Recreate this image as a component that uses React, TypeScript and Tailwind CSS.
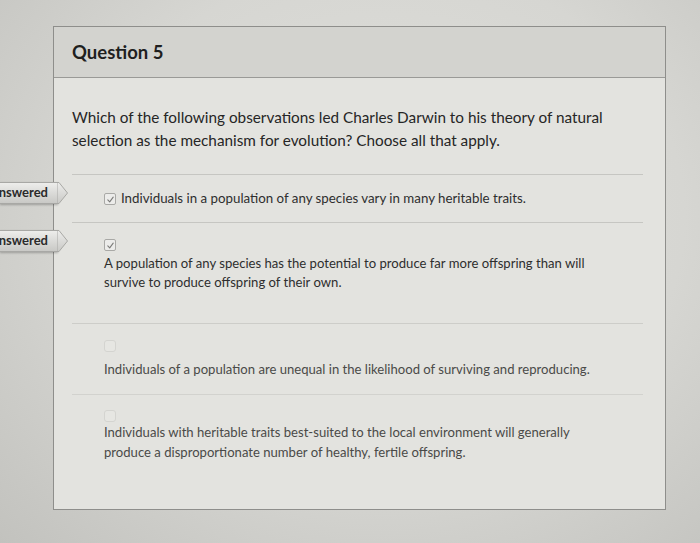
import React from 'react';

type Option = {
    text: string[];
    checked: boolean;
    inline?: boolean;
};

const options: Option[] = [
    {
        text: ['Individuals in a population of any species vary in many heritable traits.'],
        checked: true,
        inline: true,
    },
    {
        text: [
            'A population of any species has the potential to produce far more offspring than will',
            'survive to produce offspring of their own.',
        ],
        checked: true,
    },
    {
        text: ['Individuals of a population are unequal in the likelihood of surviving and reproducing.'],
        checked: false,
    },
    {
        text: [
            'Individuals with heritable traits best-suited to the local environment will generally',
            'produce a disproportionate number of healthy, fertile offspring.',
        ],
        checked: false,
    },
];

function Checkbox({ checked }: { checked: boolean }) {
    if (!checked) {
        return <div className="w-[12px] h-[12px] rounded-[3px] border border-[#d4d4d0] bg-[#e6e6e2] shrink-0" />;
    }
    return (
        <div className="w-[12px] h-[12px] rounded-[2px] border border-[#a9a9a6] bg-[#ececea] flex items-center justify-center shrink-0">
            <svg width="9" height="9" viewBox="0 0 10 10" fill="none">
                <path d="M2 5.4 L4.1 7.6 L8 2.4" stroke="#7a7a78" strokeWidth="1.2" strokeLinecap="round" strokeLinejoin="round" />
            </svg>
        </div>
    );
}

function AnsweredTab({ top }: { top: string }) {
    return (
        <div className={`absolute left-0 ${top} h-[22px] w-[68px] flex`}>
            <div className="h-full w-[58px] bg-gradient-to-b from-[#ededeb] to-[#c9c9c6] border-y border-[#a8a8a5] overflow-hidden flex items-center justify-end pr-[10px] shadow-[0_1px_2px_rgba(0,0,0,0.25)]">
                <span className="text-[13px] font-bold text-[#2b2b2b] whitespace-nowrap">Answered</span>
            </div>
            <svg width="11" height="22" viewBox="0 0 11 22" className="-ml-px">
                <defs>
                    <linearGradient id="tabg" x1="0" y1="0" x2="0" y2="1">
                        <stop offset="0" stopColor="#ededeb" />
                        <stop offset="1" stopColor="#c9c9c6" />
                    </linearGradient>
                </defs>
                <path d="M0 0.5 L2 0.5 L10.5 11 L2 21.5 L0 21.5 Z" fill="url(#tabg)" stroke="#a8a8a5" strokeWidth="1" />
            </svg>
        </div>
    );
}

export default function App() {
    return (
        <div
            className="relative w-[700px] h-[543px] overflow-hidden bg-[radial-gradient(ellipse_at_55%_40%,#e0e0dc_0%,#d6d6d2_55%,#c2c2be_100%)]"
            style={{ fontFamily: 'Lato, "Open Sans", sans-serif' }}
        >
            <div className="pt-[26px] pl-[53px]">
                {/* Question card */}
                <div className="w-[613px] h-[484px] border border-[#8e8e8b] bg-[#e3e3df] flex flex-col">
                    {/* Header */}
                    <div className="h-[51px] shrink-0 bg-[#d3d3cf] border-b border-[#9a9a97] flex items-center pl-[18px] pt-[2px]">
                        <h2 className="text-[18.5px] font-bold text-[#1f1f1f]">Question 5</h2>
                    </div>

                    {/* Body */}
                    <div className="pl-[18px] pr-[22px]">
                        <p className="pt-[28px] text-[15.3px] leading-[23px] text-[#262626]">
                            Which of the following observations led Charles Darwin to his theory of natural
                            <br />
                            selection as the mechanism for evolution? Choose all that apply.
                        </p>

                        <div className="mt-[22px] border-t border-[#c6c6c2]" />

                        {/* Option 1 */}
                        <div className="h-[47px] flex items-center gap-[5px] pl-[32px] pt-[1px]">
                            <Checkbox checked={options[0].checked} />
                            <span className="text-[13.3px] text-[#2e2e2e]">{options[0].text[0]}</span>
                        </div>
                        <div className="border-t border-[#c6c6c2]" />

                        {/* Option 2 */}
                        <div className="h-[100px] pl-[32px] pt-[16px]">
                            <Checkbox checked={options[1].checked} />
                            <p className="mt-[3px] text-[13.1px] leading-[19px] text-[#2e2e2e]">
                                {options[1].text[0]}
                                <br />
                                {options[1].text[1]}
                            </p>
                        </div>
                        <div className="border-t border-[#cdcdc9]" />

                        {/* Option 3 */}
                        <div className="h-[70px] pl-[32px] pt-[16px]">
                            <Checkbox checked={options[2].checked} />
                            <p className="mt-[8px] text-[13.1px] leading-[19px] text-[#4a4a48]">
                                {options[2].text[0]}
                            </p>
                        </div>
                        <div className="border-t border-[#d2d2ce]" />

                        {/* Option 4 */}
                        <div className="pl-[32px] pt-[15px]">
                            <Checkbox checked={options[3].checked} />
                            <p className="text-[13.1px] leading-[20px] text-[#4a4a48]">
                                {options[3].text[0]}
                                <br />
                                {options[3].text[1]}
                            </p>
                        </div>
                    </div>
                </div>
            </div>

            <AnsweredTab top="top-[182px]" />
            <AnsweredTab top="top-[230px]" />
        </div>
    );
}
